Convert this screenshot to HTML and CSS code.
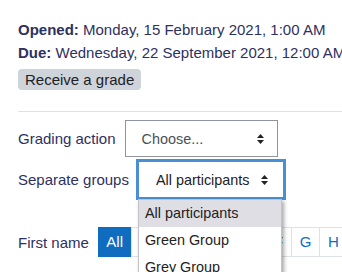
FILE: index.html
```html
<!DOCTYPE html>
<html>
<head>
<meta charset="utf-8">
<link rel="stylesheet" href="styles.css">
</head>
<body>
<div class="page">
  <h2 class="title">Group assignment</h2>
  <div class="dates">
    <div class="date-line"><strong>Opened:</strong> Monday, 15 February 2021, 1:00 AM</div>
    <div class="date-line"><strong>Due:</strong> Wednesday, 22 September 2021, 12:00 AM</div>
  </div>
  <div class="badge-wrap"><span class="badge">Receive a grade</span></div>
  <hr class="divider">
  <div class="field">
    <label class="field-label">Grading action</label>
    <div class="select sel-action">
      <span class="sel-text muted">Choose...</span>
      <svg class="sel-arrow" width="7" height="10" viewBox="0 0 7 10"><path d="M0 4 L3.5 0 L7 4 Z M0 6 L3.5 10 L7 6 Z" fill="#222"/></svg>
    </div>
  </div>
  <div class="field">
    <label class="field-label">Separate groups</label>
    <div class="select sel-groups">
      <span class="sel-text">All participants</span>
      <svg class="sel-arrow" width="7" height="10" viewBox="0 0 7 10"><path d="M0 4 L3.5 0 L7 4 Z M0 6 L3.5 10 L7 6 Z" fill="#222"/></svg>
      <ul class="menu">
        <li class="menu-item selected">All participants</li>
        <li class="menu-item">Green Group</li>
        <li class="menu-item">Grey Group</li>
        <li class="menu-item">Red Group</li>
      </ul>
    </div>
  </div>
  <div class="initials">
    <span class="initials-label">First name</span>
    <ul class="pages">
      <li class="page-item active">All</li>
      <li class="page-item">A</li>
      <li class="page-item">B</li>
      <li class="page-item">C</li>
      <li class="page-item">D</li>
      <li class="page-item">E</li>
      <li class="page-item">F</li>
      <li class="page-item">G</li>
      <li class="page-item">H</li>
      <li class="page-item">I</li>
      <li class="page-item">J</li>
    </ul>
  </div>
</div>
</body>
</html>
```

FILE: styles.css
```css
html, body {
  margin: 0;
  padding: 0;
  overflow: hidden;
  background: #fff;
}
body {
  font-family: "Liberation Sans", Arial, sans-serif;
  font-size: 15px;
  color: #2e3160;
  width: 342px;
  height: 272px;
}
.page {
  padding-left: 18px;
  white-space: nowrap;
}
.title {
  margin: -32px 0 17px;
  font-size: 28px;
  line-height: 34px;
  font-weight: 700;
  color: #f98012;
}
.date-line {
  line-height: 22.5px;
}
.date-line strong {
  font-weight: 700;
}
.badge-wrap {
  margin-top: 5px;
  height: 21px;
}
.badge {
  display: inline-block;
  background: #ced4da;
  color: #1d2125;
  border-radius: 4px;
  padding: 0 7px;
  line-height: 21px;
  height: 21px;
}
.divider {
  border: 0;
  border-top: 1px solid #dee2e6;
  margin: 21px 0 8px;
  height: 0;
}
.field {
  display: flex;
  align-items: center;
  margin-bottom: 4px;
}
.field-label {
  margin-right: 9px;
}
.select {
  position: relative;
  box-sizing: border-box;
  height: 37px;
  display: flex;
  align-items: center;
  justify-content: space-between;
  font-size: 14.4px;
  color: #1d2125;
  background: #fff;
}
.sel-action {
  width: 153px;
  border: 1px solid #8f959e;
  padding: 0 13px 0 16px;
}
.muted {
  color: #495057;
}
.sel-groups {
  width: 146px;
  border: 1px solid #4a8fd6;
  box-shadow: 0 0 0 2px #4a8fd6;
  padding: 0 15px 0 17px;
  margin-left: 0;
}
.sel-arrow {
  display: block;
}
.menu {
  position: absolute;
  left: -1px;
  top: 37px;
  width: 144px;
  box-sizing: border-box;
  margin: 0;
  padding: 0;
  list-style: none;
  background: #fff;
  border: 1px solid #c3c3c6;
  box-shadow: 2px 2px 4px rgba(0, 0, 0, 0.35);
  z-index: 5;
}
.menu-item {
  height: 27px;
  line-height: 27px;
  padding-left: 6px;
  font-size: 14.4px;
  color: #222;
}
.menu-item.selected {
  background: #dfdee4;
}
.initials {
  display: flex;
  align-items: center;
  margin-top: 29px;
}
.initials-label {
  margin-right: 9px;
}
.pages {
  display: flex;
  margin: 0;
  padding: 0;
  list-style: none;
}
.page-item {
  border: 1px solid #dee2e6;
  padding: 0 7.8px;
  line-height: 28px;
  color: #0f6cbf;
  margin-left: -1px;
}
.page-item.active {
  margin-left: 0;
  padding: 0 7.5px;
  background: #0f6cbf;
  border-color: #0f6cbf;
  color: #fff;
}
```
